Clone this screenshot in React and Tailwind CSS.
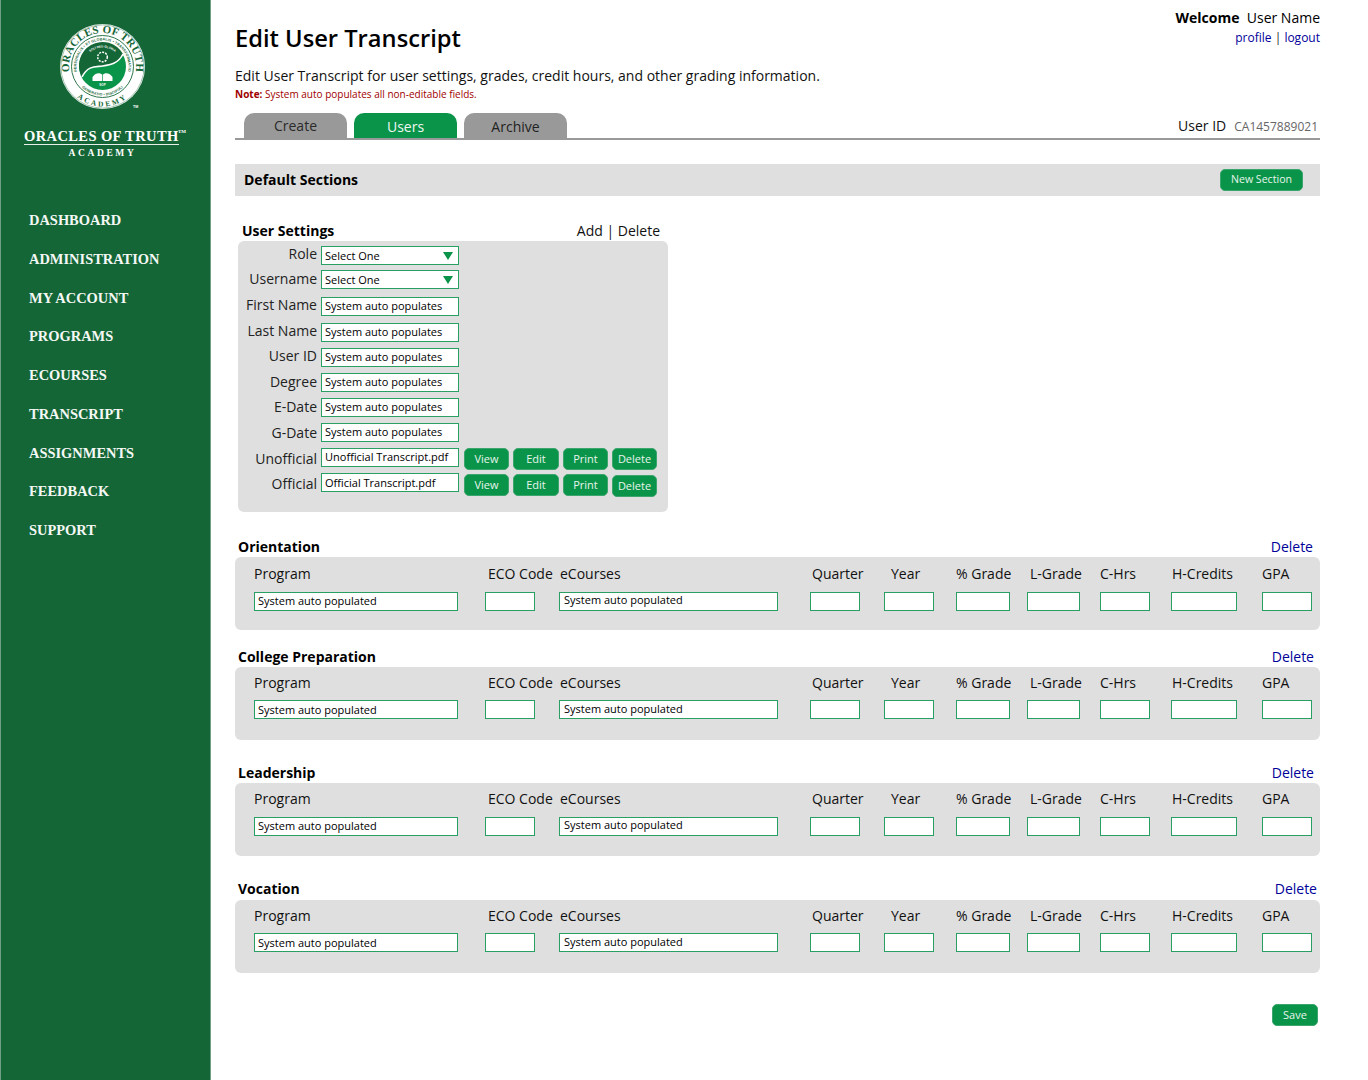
import React from "react";

const navItems = ['DASHBOARD', 'ADMINISTRATION', 'MY ACCOUNT', 'PROGRAMS', 'ECOURSES', 'TRANSCRIPT', 'ASSIGNMENTS', 'FEEDBACK', 'SUPPORT'];

const inputClass = "block h-[19px] bg-white border-[1.5px] border-[#2a9f63] px-[3px] text-[11px] text-black outline-none";
const btnClass = "flex items-center justify-center h-[22px] rounded-[5px] bg-[#0a9449] border border-[#3aa56c] text-[11px] text-[#e8f5ec]";
const labelClass = "w-[79px] text-right text-[14px] leading-5 text-[#222] whitespace-nowrap";

const settingsRows = [
  { label: 'First Name', value: 'System auto populates', mt: 'mt-[7px]', up: '-mt-[2px]' },
  { label: 'Last Name', value: 'System auto populates', mt: 'mt-[6px]', up: '-mt-[2px]' },
  { label: 'User ID', value: 'System auto populates', mt: 'mt-[5px]', up: '-mt-[2px]' },
  { label: 'Degree', value: 'System auto populates', mt: 'mt-[5px]', up: '-mt-[1px]' },
  { label: 'E-Date', value: 'System auto populates', mt: 'mt-[5px]', up: '-mt-[1px]' },
  { label: 'G-Date', value: 'System auto populates', mt: 'mt-[5px]', up: 'mt-0' },
];

const columns = [
  { label: 'Program', w: 'w-[204px]', ml: 'ml-0', pl: 'pl-0', value: 'System auto populated' },
  { label: 'ECO Code', w: 'w-[50px]', ml: 'ml-[27px]', pl: 'pl-[3px]' },
  { label: 'eCourses', w: 'w-[219px]', ml: 'ml-[24px]', pl: 'pl-[1px]', value: 'System auto populated', up: true },
  { label: 'Quarter', w: 'w-[50px]', ml: 'ml-[32px]', pl: 'pl-[2px]' },
  { label: 'Year', w: 'w-[50px]', ml: 'ml-[24px]', pl: 'pl-[7px]' },
  { label: '% Grade', w: 'w-[54px]', ml: 'ml-[22px]', pl: 'pl-0' },
  { label: 'L-Grade', w: 'w-[53px]', ml: 'ml-[17px]', pl: 'pl-[3px]' },
  { label: 'C-Hrs', w: 'w-[50px]', ml: 'ml-[20px]', pl: 'pl-0' },
  { label: 'H-Credits', w: 'w-[66px]', ml: 'ml-[21px]', pl: 'pl-[1px]' },
  { label: 'GPA', w: 'w-[50px]', ml: 'ml-[25px]', pl: 'pl-0' },
];

const sections = [
  { title: 'Orientation', mt: 'mt-[25px]', titlePb: 'pb-[2px]', rowMt: 'mt-[8px]', labelPt: 'pt-[7px]', pr: 'pr-[7px]', leftPb: 'pb-[2px]', rightPb: 'pb-[4px] pl-[4px]' },
  { title: 'College Preparation', mt: 'mt-[17px]', titlePb: 'pb-[2px]', rowMt: 'mt-[7px]', labelPt: 'pt-[6px]', pr: 'pr-[6px]', leftPb: 'pb-0', rightPb: 'pb-[2px] pl-[4px]' },
  { title: 'Leadership', mt: 'mt-[23px]', titlePb: 'pb-[2px]', rowMt: 'mt-[8px]', labelPt: 'pt-[6px]', pr: 'pr-[6px]', leftPb: 'pb-[2px]', rightPb: 'pb-[4px] pl-[4px]' },
  { title: 'Vocation', mt: 'mt-[24px]', titlePb: 'pb-[4px]', rowMt: 'mt-[7px]', labelPt: 'pt-[6px]', pr: 'pr-[3px]', leftPb: 'pb-0', rightPb: 'pb-[2px] pl-[4px]' },
];

const Logo = () => (
  <svg width="105" height="105" viewBox="0 0 105 105" className="block">
    <defs>
      <path id="arcTop" d="M 20.14 60.17 A 33.5 33.5 0 1 1 84.86 60.17" fill="none" />
      <path id="arcBottom" d="M 19.7 74.4 A 40 40 0 0 0 85.3 74.4" fill="none" />
      <path id="arcInner" d="M 27.4 58.2 A 26 26 0 1 1 77.6 58.2" fill="none" />
      <path id="arcInnerB" d="M 25.5 63 A 29.5 29.5 0 0 0 79.5 63" fill="none" />
      <path id="arcMotto" d="M 35.5 43 A 19 19 0 0 1 69.5 43" fill="none" />
    </defs>
    <circle cx="52.5" cy="51.5" r="42.5" fill="#fff" />
    <circle cx="52.5" cy="51.5" r="41.6" fill="none" stroke="#156637" strokeWidth="0.4" />
    <circle cx="52.5" cy="51.5" r="31" fill="none" stroke="#156637" strokeWidth="0.9" />
    {/* inner disc */}
    <circle cx="52.5" cy="51.5" r="23.5" fill="#0a9449" />
    <path d="M 32 62 A 23.5 23.5 0 0 1 73 39 C 68 49 60 50 52.5 51 C 46 52 38 50 32 62 Z" fill="#156637" />
    <path d="M 32 62 C 38 50 46 52 52.5 51 C 60 50 68 49 73 39" fill="none" stroke="#fff" strokeWidth="1.6" />
    <text fill="#156637" fontFamily="'Liberation Serif', serif" fontWeight="700" fontSize="11" letterSpacing="0.2">
      <textPath href="#arcTop" startOffset="50%" textAnchor="middle">ORACLES OF TRUTH</textPath>
    </text>
    <text fill="#156637" fontFamily="'Liberation Serif', serif" fontWeight="700" fontSize="7.5" letterSpacing="2.2">
      <textPath href="#arcBottom" startOffset="50%" textAnchor="middle">ACADEMY</textPath>
    </text>
    <text fill="#156637" fontFamily="'Liberation Sans', sans-serif" fontWeight="700" fontSize="3.6" letterSpacing="0.15">
      <textPath href="#arcInner" startOffset="50%" textAnchor="middle">PERSONALIS • ET GLOBALIS • TRANSFORMATIO</textPath>
    </text>
    <text fill="#156637" fontFamily="'Liberation Sans', sans-serif" fontWeight="700" fontSize="3.6" letterSpacing="0.15">
      <textPath href="#arcInnerB" startOffset="50%" textAnchor="middle">GENERATIO • DISCIPULI</textPath>
    </text>
    <text fill="#fff" fontFamily="'Liberation Sans', sans-serif" fontWeight="700" fontSize="3">
      <textPath href="#arcMotto" startOffset="50%" textAnchor="middle">SOLI DEO GLORIA</textPath>
    </text>
    <circle cx="52.5" cy="42" r="4.8" fill="none" stroke="#fff" strokeWidth="1.5" strokeDasharray="2 1.1" />
    <path d="M 42.5 62 C 46 57.5 50 57.5 52.5 60 C 55 57.5 59 57.5 62.5 62 L 62.5 66 L 42.5 66 Z" fill="#fff" />
    <path d="M 52.5 60 L 52.5 66" stroke="#0a9449" strokeWidth="0.7" />
    <text x="52.5" y="71" textAnchor="middle" fill="#fff" fontFamily="'Liberation Sans', sans-serif" fontWeight="700" fontSize="3">SOP</text>
    <text x="83" y="93" fill="#fff" fontFamily="'Liberation Sans', sans-serif" fontWeight="700" fontSize="3.6">TM</text>
  </svg>
);

const Section = ({ s }) => (
  <div className={s.mt}>
    <div className={`flex justify-between items-center h-5 pl-[3px] ${s.titlePb}`}>
      <span className="text-[14px] font-bold text-black">{s.title}</span>
      <span className={`text-[14px] text-[#000099] ${s.pr}`}>Delete</span>
    </div>
    <div className={`h-[73px] bg-[#dfdfdf] rounded-[6px] pl-[19px] ${s.labelPt}`}>
      <div className="flex">
        {columns.map(c => (
          <div key={c.label} className={`${c.w} ${c.ml} ${c.pl} text-[14px] leading-5 text-[#111] whitespace-nowrap`}>{c.label}</div>
        ))}
      </div>
      <div className={`flex ${s.rowMt}`}>
        {columns.map(c => (
          <input
            key={c.label}
            readOnly
            value={c.value || ''}
            className={`${inputClass} ${c.w} ${c.ml} ${c.up ? s.rightPb : s.leftPb}`}
          />
        ))}
      </div>
    </div>
  </div>
);

const SelectBox = ({ label, mt, up }) => (
  <div className={`flex items-start h-5 ${mt}`}>
    <label className={`${labelClass} ${up}`}>{label}</label>
    <div className={`${inputClass} ml-[4px] w-[138px] flex items-center justify-between pr-[5px]`}>
      <span className="pt-[2px]">Select One</span>
      <svg width="10" height="8" viewBox="0 0 10 8"><path d="M0 0H10L5 8Z" fill="#0a9449" /></svg>
    </div>
  </div>
);

const FileRow = ({ label, value, mt, up, inputPb, btnMt, deleteMt }) => (
  <div className={`flex items-start h-5 ${mt}`}>
    <label className={`${labelClass} ${up}`}>{label}</label>
    <input readOnly value={value} className={`${inputClass} ml-[4px] w-[138px] ${inputPb}`} />
    <button className={`${btnClass} ml-[5px] w-[45px] ${btnMt}`}>View</button>
    <button className={`${btnClass} ml-[4px] w-[46px] ${btnMt}`}>Edit</button>
    <button className={`${btnClass} ml-[4px] w-[45px] ${btnMt}`}>Print</button>
    <button className={`${btnClass} ml-[4px] w-[45px] ${deleteMt}`}>Delete</button>
  </div>
);

export default function App() {
  return (
    <div className="flex min-h-[1080px] bg-white font-['Open_Sans',sans-serif]">
      {/* Sidebar */}
      <aside className="w-[211px] shrink-0 bg-[#156637] border-x border-[#6f9f86] flex flex-col items-center">
        <div className="w-[209px] pt-[15px] flex flex-col items-center">
          <div className="ml-[-6px]"><Logo /></div>
          <div className="mt-[8px] w-[155px] ml-[-8px] relative border-b border-[#e6efe9] text-left text-[14.5px] leading-4 font-bold text-white tracking-[0.4px] whitespace-nowrap font-['Liberation_Serif',serif]">
            ORACLES OF TRUTH
            <span className="absolute right-[-7px] top-0 text-[5px] leading-[8px] font-bold tracking-normal">TM</span>
          </div>
          <div className="mt-[2px] ml-[-6px] text-[9.5px] leading-3 font-bold text-white tracking-[2.6px] font-['Liberation_Serif',serif]">ACADEMY</div>
        </div>
        <nav className="w-full mt-[51px] pl-[28px] flex flex-col gap-[18.75px]">
          {navItems.map(item => (
            <a key={item} className="h-5 text-[14.45px] leading-5 font-bold text-[#f4f8f5] whitespace-nowrap font-['Liberation_Serif',serif]">{item}</a>
          ))}
        </nav>
      </aside>

      {/* Main */}
      <main className="flex-1 pl-[24px] pr-[48px]">
        <header className="h-[113px] flex justify-between">
          <div className="pt-[22px]">
            <h1 className="text-[23.7px] leading-8 font-semibold text-black">Edit User Transcript</h1>
            <p className="mt-[12px] text-[14px] leading-5 text-[#111]">Edit User Transcript for user settings, grades, credit hours, and other grading information.</p>
            <p className="text-[10px] leading-[14px] mt-[1px] text-[#a00000]"><span className="font-bold">Note:</span> System auto populates all non-editable fields.</p>
          </div>
          <div className="pt-[8px] text-right">
            <div className="text-[14px] leading-5 text-black"><span className="font-bold">Welcome</span>&nbsp; User Name</div>
            <div className="text-[12px] leading-[18px] mt-[1px] text-[#222]"><a className="text-[#000099]">profile</a> | <a className="text-[#000099]">logout</a></div>
          </div>
        </header>

        {/* Tabs */}
        <div className="h-[27px] border-b-2 border-[#999] flex justify-between">
          <div className="flex pl-[9px] gap-[7px]">
            <div className="w-[103px] h-[25px] rounded-t-[10px] bg-[#999] text-[14px] leading-[25px] text-center text-[#2a2a2a]">Create</div>
            <div className="w-[103px] h-[25px] rounded-t-[10px] bg-[#0a9449] text-[14px] leading-[27px] text-center text-[#eef8f1]">Users</div>
            <div className="w-[103px] h-[25px] rounded-t-[10px] bg-[#999] text-[14px] leading-[27px] text-center text-[#222]">Archive</div>
          </div>
          <div className="pr-[2px] pt-[2px] leading-5 whitespace-nowrap">
            <span className="text-[14px] font-medium text-[#111]">User ID</span>
            <span className="ml-[8px] text-[12px] text-[#666]">CA1457889021</span>
          </div>
        </div>

        {/* Default sections bar */}
        <div className="mt-[24px] h-[32px] bg-[#dfdfdf] flex items-center justify-between pl-[9px] pr-[17px]">
          <span className="text-[14px] font-bold text-black pb-[2px]">Default Sections</span>
          <button className={`${btnClass} w-[83px] !text-[10.6px]`}>New Section</button>
        </div>

        {/* User settings */}
        <div className="mt-[25px] w-[433px] ml-[3px]">
          <div className="flex justify-between items-center h-5 pl-[4px] pr-[11px] pb-[2px]">
            <span className="text-[14px] font-bold text-black">User Settings</span>
            <span className="text-[14px] text-[#111]">Add | Delete</span>
          </div>
          <div className="w-[430px] h-[271px] bg-[#dfdfdf] rounded-[6px] pt-[5px]">
            <SelectBox label="Role" mt="mt-0" up="-mt-[2px]" />
            <SelectBox label="Username" mt="mt-[4px]" up="-mt-[1px]" />
            {settingsRows.map(r => (
              <div key={r.label} className={`flex items-start h-5 ${r.mt}`}>
                <label className={`${labelClass} ${r.up}`}>{r.label}</label>
                <input readOnly value={r.value} className={`${inputClass} ml-[4px] w-[138px] pb-[2px]`} />
              </div>
            ))}
            <FileRow label="Unofficial" value="Unofficial Transcript.pdf" mt="mt-[5px]" up="mt-[1px]" inputPb="pb-[2px]" btnMt="mt-0" deleteMt="mt-0" />
            <FileRow label="Official" value="Official Transcript.pdf" mt="mt-[5px]" up="mt-[1px]" inputPb="pb-0" btnMt="mt-[1px]" deleteMt="mt-[2px]" />
          </div>
        </div>

        {sections.map(s => <Section key={s.title} s={s} />)}

        <div className="flex justify-end pr-[2px] mt-[31px]">
          <button className={`${btnClass} w-[46px]`}>Save</button>
        </div>
      </main>
    </div>
  );
}
